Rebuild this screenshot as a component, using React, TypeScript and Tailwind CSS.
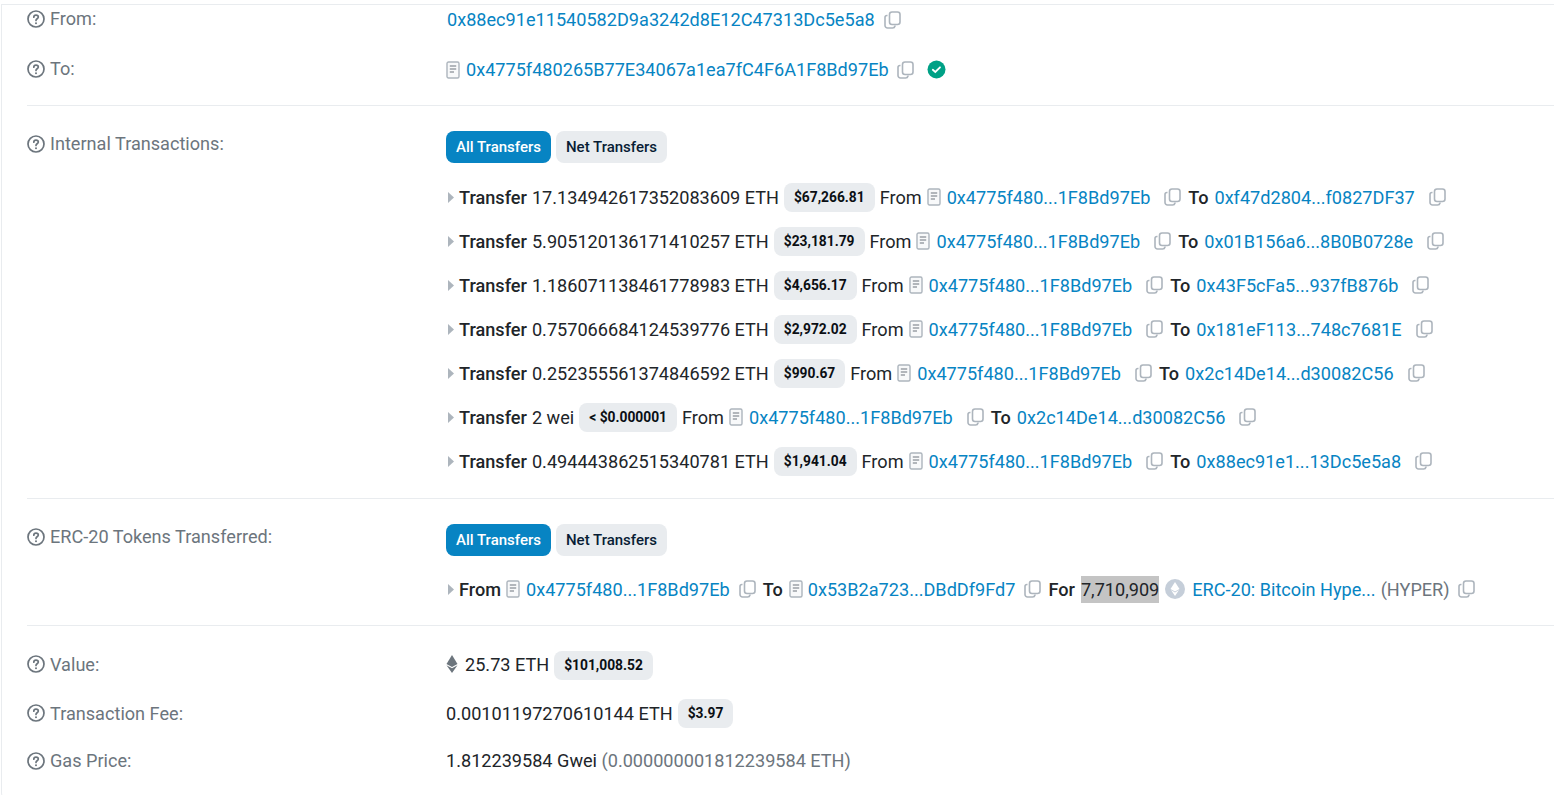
import React from "react";

const ADDR = "0x4775f480...1F8Bd97Eb";

interface ITransfer {
  amount: string;
  usd: string;
  to: string;
}

const transfers: ITransfer[] = [
  { amount: "17.134942617352083609 ETH", usd: "$67,266.81", to: "0xf47d2804...f0827DF37" },
  { amount: "5.905120136171410257 ETH", usd: "$23,181.79", to: "0x01B156a6...8B0B0728e" },
  { amount: "1.186071138461778983 ETH", usd: "$4,656.17", to: "0x43F5cFa5...937fB876b" },
  { amount: "0.757066684124539776 ETH", usd: "$2,972.02", to: "0x181eF113...748c7681E" },
  { amount: "0.252355561374846592 ETH", usd: "$990.67", to: "0x2c14De14...d30082C56" },
  { amount: "2 wei", usd: "< $0.000001", to: "0x2c14De14...d30082C56" },
  { amount: "0.494443862515340781 ETH", usd: "$1,941.04", to: "0x88ec91e1...13Dc5e5a8" },
];

const Help = () => (
  <svg width="18" height="18" viewBox="0 0 18 18" fill="none" className="shrink-0">
    <circle cx="9" cy="9" r="8" stroke="#6c757d" strokeWidth="1.700" />
    <path d="M6.800 7.200c0-1.300 1-2.100 2.200-2.100s2.300.8 2.300 2c0 1.700-2.300 1.700-2.300 3.300" stroke="#6c757d" strokeWidth="1.700" strokeLinecap="round" />
    <circle cx="9" cy="13.200" r="1" fill="#6c757d" />
  </svg>
);

const Copy = ({ className = "" }: { className?: string }) => (
  <svg width="17" height="18" viewBox="0 0 17 18" fill="none" className={`shrink-0 ${className}`}>
    <rect x="5.500" y="1" width="10.500" height="12.500" rx="2.500" stroke="#adb5bd" strokeWidth="1.600" />
    <path d="M3.500 4.500H3A2 2 0 0 0 1 6.500V14.500A2.500 2.500 0 0 0 3.500 17H8.500A2.500 2.500 0 0 0 11 15V14.500" stroke="#adb5bd" strokeWidth="1.600" />
  </svg>
);

const Doc = () => (
  <svg width="14" height="18" viewBox="0 0 14 18" fill="none" className="shrink-0">
    <rect x="1" y="1" width="12" height="16" rx="1.500" fill="#f8f9fa" stroke="#adb5bd" strokeWidth="1.400" />
    <path d="M3.800 5H10.200M3.800 8H10.200M3.800 11H8" stroke="#6c757d" strokeWidth="1.100" />
  </svg>
);

const Caret = () => (
  <svg width="6" height="11" viewBox="0 0 6 11" className="ml-[2px] shrink-0">
    <path d="M0 0L6 5.500L0 11Z" fill="#adb5bd" />
  </svg>
);

const Badge = ({ children }: { children: React.ReactNode }) => (
  <span className="inline-flex h-[29px] items-center rounded-lg bg-[#e9ecef] px-[10px] text-[13.8px] font-bold text-[#0b0f14]">
    {children}
  </span>
);

const Link = ({ children }: { children: React.ReactNode }) => (
  <a className="text-[#0784c3]">{children}</a>
);

const Label = ({ children }: { children: React.ReactNode }) => (
  <div className="flex h-[27px] w-[419px] shrink-0 items-center gap-[5px] text-[#6c757d]">
    <Help />
    <span>{children}</span>
  </div>
);

const Tabs = () => (
  <div className="flex gap-[5px] text-[15px] font-medium">
    <span className="flex h-[32px] items-center rounded-lg bg-[#0784c3] px-[10px] text-white">All Transfers</span>
    <span className="flex h-[32px] items-center rounded-lg bg-[#e9ecef] px-[10px] text-[#081d35]">Net Transfers</span>
  </div>
);

const TransferRow = ({ t }: { t: ITransfer }) => (
  <div className="flex h-[44px] items-center whitespace-nowrap">
    <Caret />
    <span className="ml-[5px] font-medium">Transfer</span>
    <span className="ml-[5px]">{t.amount}</span>
    <span className="ml-[5px]"><Badge>{t.usd}</Badge></span>
    <span className="ml-[5px]">From</span>
    <span className="ml-[5px]"><Doc /></span>
    <span className="ml-[6px]"><Link>{ADDR}</Link></span>
    <Copy className="ml-[14px]" />
    <span className="ml-[7px] font-medium">To</span>
    <span className="ml-[6px]"><Link>{t.to}</Link></span>
    <Copy className="ml-[14px]" />
  </div>
);

export default function App() {
  return (
    <div className="h-[795px] overflow-hidden bg-white pl-[1px] pt-[4px] text-[18.13px] leading-[27px] text-[#212529] [font-family:Roboto,sans-serif]">
      <div className="h-[800px] rounded-bl-xl border-l border-t border-[#e9ecef] pl-[25px]">
        <div className="flex h-[38px] items-start">
          <Label>From:</Label>
          <div className="mt-[1px] flex items-center">
            <span className="ml-[1px]"><Link>0x88ec91e11540582D9a3242d8E12C47313Dc5e5a8</Link></span>
            <Copy className="ml-[9px]" />
          </div>
        </div>

        <div className="mt-[12px] flex">
          <Label>To:</Label>
          <div className="mt-[1px] flex h-[27px] items-center">
            <Doc />
            <span className="ml-[6px]"><Link>0x4775f480265B77E34067a1ea7fC4F6A1F8Bd97Eb</Link></span>
            <Copy className="ml-[8px]" />
            <svg width="19" height="19" viewBox="0 0 19 19" className="ml-[13px]">
              <circle cx="9.500" cy="9.500" r="9" fill="#00a186" />
              <path d="M5.800 9.800L8.300 12L13 7.300" stroke="#fff" strokeWidth="1.800" fill="none" strokeLinecap="round" />
            </svg>
          </div>
        </div>

        <hr className="mt-[22px] border-[#e9ecef]" />

        <div className="mt-[25px] flex">
          <div className="-mt-[1px]"><Label>Internal Transactions:</Label></div>
          <div>
            <Tabs />
            <div className="mt-[12px]">
              {transfers.map((t, i) => <TransferRow key={i} t={t} />)}
            </div>
          </div>
        </div>

        <hr className="mt-[15px] border-[#e9ecef]" />

        <div className="mt-[25px] flex">
          <div className="-mt-[1px]"><Label>ERC-20 Tokens Transferred:</Label></div>
          <div>
            <Tabs />
            <div className="mt-[11px] flex h-[44px] items-center whitespace-nowrap">
              <Caret />
              <span className="ml-[5px] font-medium">From</span>
              <span className="ml-[5px]"><Doc /></span>
              <span className="ml-[6px]"><Link>{ADDR}</Link></span>
              <Copy className="ml-[9px]" />
              <span className="ml-[7px] font-medium">To</span>
              <span className="ml-[6px]"><Doc /></span>
              <span className="ml-[5px]"><Link>0x53B2a723...DBdDf9Fd7</Link></span>
              <Copy className="ml-[9px]" />
              <span className="ml-[7px] font-medium">For</span>
              <span className="ml-[6px] bg-[#c4c4c4]">7,710,909</span>
              <svg width="20" height="20" viewBox="0 0 20 20" className="ml-[6px] shrink-0">
                <circle cx="10" cy="10" r="10" fill="#c5ced9" />
                <path d="M10 3L14.500 10L10 12.500L5.500 10Z" fill="#fff" />
                <path d="M10 13.500L14 11L10 17L6 11Z" fill="#fff" />
              </svg>
              <span className="ml-[7px]"><Link>ERC-20: Bitcoin Hype...</Link></span>
              <span className="ml-[5px] text-[#6c757d]">(HYPER)</span>
              <Copy className="ml-[8px]" />
            </div>
          </div>
        </div>

        <hr className="mt-[14px] border-[#e9ecef]" />

        <div className="mt-[22px] flex items-center">
          <Label>Value:</Label>
          <div className="flex items-center">
            <svg width="12" height="18" viewBox="0 0 12 18" className="shrink-0">
              <path d="M6 0L11.500 9L6 12L0.500 9Z" fill="#6c757d" />
              <path d="M6 13.200L11.500 10.200L6 18L0.500 10.200Z" fill="#6c757d" />
            </svg>
            <span className="ml-[7px]">25.73 ETH</span>
            <span className="ml-[5px] mt-[2px]"><Badge>$101,008.52</Badge></span>
          </div>
        </div>

        <div className="mt-[18px] flex items-center">
          <Label>Transaction Fee:</Label>
          <div className="flex items-center">
            <span>0.00101197270610144 ETH</span>
            <span className="ml-[5px]"><Badge>$3.97</Badge></span>
          </div>
        </div>

        <div className="mt-[19px] flex items-center">
          <Label>Gas Price:</Label>
          <div>
            <span>1.812239584 Gwei </span>
            <span className="text-[#6c757d]">(0.000000001812239584 ETH)</span>
          </div>
        </div>
      </div>
    </div>
  );
}
